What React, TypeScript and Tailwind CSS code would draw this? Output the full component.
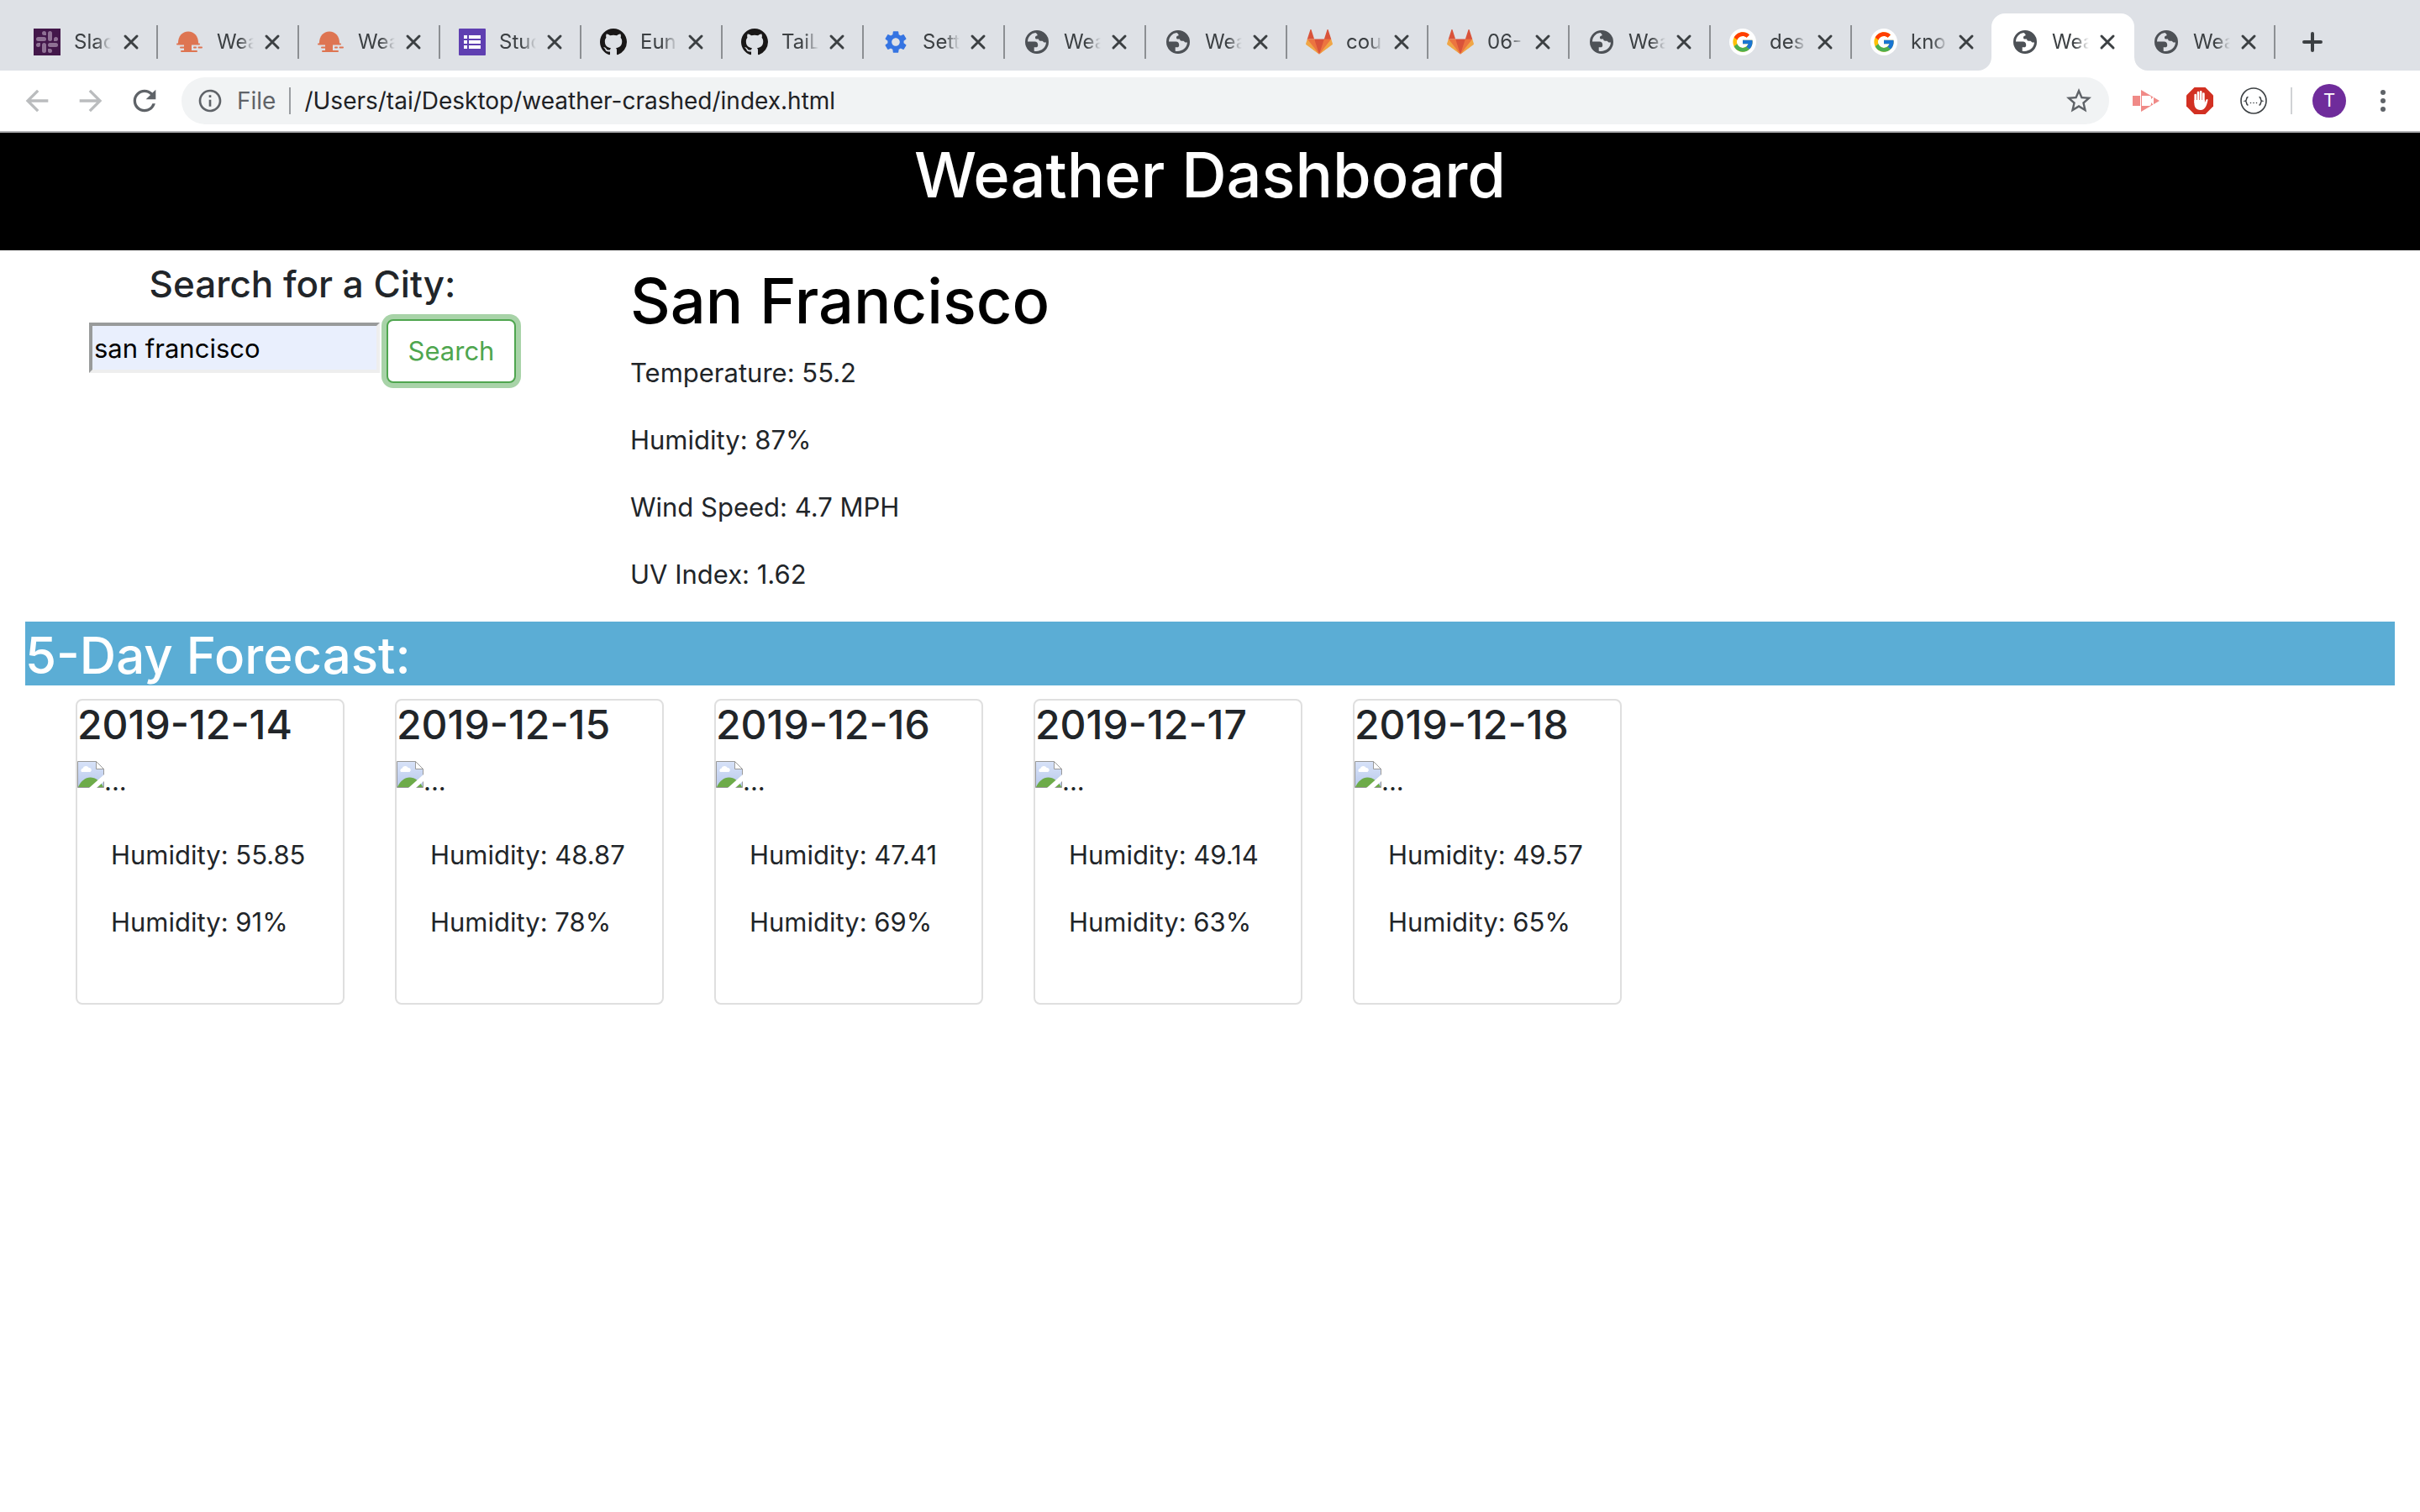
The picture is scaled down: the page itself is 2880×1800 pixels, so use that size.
import type { ReactNode } from "react";
import { FcGoogle } from "react-icons/fc";
import { MdArrowBack, MdArrowForward, MdInfoOutline, MdRefresh, MdSettings, MdStarBorder } from "react-icons/md";

function SlackIcon() {
  return (
    <svg viewBox="0 0 32 32" className="size-8">
      <rect width="32" height="32" fill="#43174a" />
      <g fill="#8f7194">
        <path d="M12.500 3a2.500 2.500 0 0 1 2.500 2.500V8h-2.500a2.500 2.500 0 0 1 0-5z" />
        <rect x="3" y="10" width="12" height="5" rx="2.500" />
        <path d="M29 12.500a2.500 2.500 0 0 1-2.500 2.500H24v-2.500a2.500 2.500 0 0 1 5 0z" />
        <rect x="17" y="3" width="5" height="12" rx="2.500" />
        <path d="M19.500 29a2.500 2.500 0 0 1-2.500-2.500V24h2.500a2.500 2.500 0 0 1 0 5z" />
        <rect x="17" y="17" width="12" height="5" rx="2.500" />
        <path d="M3 19.500A2.500 2.500 0 0 1 5.500 17H8v2.500a2.500 2.500 0 0 1-5 0z" />
        <rect x="10" y="17" width="5" height="12" rx="2.500" />
      </g>
    </svg>
  );
}

function SunriseIcon() {
  return (
    <svg viewBox="0 0 32 32" className="size-8" fill="#de7552">
      <path d="M2 17C2 9 7 3.500 14 3.500S26 9 26 17v1H2z" />
      <rect x="0" y="17.500" width="28" height="2" rx="1" />
      <path d="M9 19h9v8H9z" />
      <rect x="4" y="21.500" width="14" height="2" rx="1" />
      <rect x="20" y="21.500" width="4" height="2" rx="1" />
      <rect x="25.500" y="21.500" width="5.500" height="2" rx="1" />
      <rect x="5" y="26" width="20" height="2" rx="1" />
    </svg>
  );
}

function FormsIcon() {
  return (
    <svg viewBox="0 0 32 32" className="size-8">
      <rect width="32" height="32" rx="1" fill="#5f3fb1" />
      <path fill="#fff" d="M6 8h4v4H6zM6 14h4v4H6zM6 20h4v4H6zM12 8h14v4H12zM12 14h14v4H12zM12 20h14v4H12z" />
    </svg>
  );
}

function GithubIcon() {
  return (
    <svg viewBox="0 0 16 16" className="size-8" fill="#191717">
      <path d="M8 0C3.58 0 0 3.58 0 8c0 3.54 2.29 6.53 5.47 7.59.4.07.55-.17.55-.38 0-.19-.01-.82-.01-1.49-2.01.37-2.53-.49-2.69-.94-.09-.23-.48-.94-.82-1.13-.28-.15-.68-.52-.01-.53.63-.01 1.08.58 1.23.82.72 1.21 1.87.87 2.33.66.07-.52.28-.87.51-1.07-1.78-.2-3.64-.89-3.64-3.95 0-.87.31-1.59.82-2.15-.08-.2-.36-1.02.08-2.12 0 0 .67-.21 2.2.82.64-.18 1.32-.27 2-.27.68 0 1.36.09 2 .27 1.53-1.04 2.2-.82 2.2-.82.44 1.1.16 1.92.08 2.12.51.56.82 1.27.82 2.15 0 3.07-1.87 3.75-3.65 3.95.29.25.54.73.54 1.48 0 1.07-.01 1.93-.01 2.2 0 .21.15.46.55.38A8.013 8.013 0 0 0 16 8c0-4.42-3.58-8-8-8z" />
    </svg>
  );
}

function GlobeIcon() {
  return (
    <svg viewBox="-2 -2 32 32" className="size-8">
      <path
        fill="#4d5156"
        fillRule="evenodd"
        d="M14 0a14 14 0 1 0 0 28a14 14 0 1 0 0-28zM12.300 3C7 3.600 3.200 8 3 13.500h8.500c2.200 0 3.700 1.600 3.700 4v.500c0 1.400-1 2.300-2.300 2.300h-2.200v4.400C18 26 24.500 21.500 25 14.600h-2.500l-2-1.800h-2.200c-1.300 0-2.200-1-2.200-2.300h-3.300c-1.200-1-1-2.600-.100-3.400l1.800-.900c.700-1-.600-2-2.200-3.200z"
      />
    </svg>
  );
}

function GitlabIcon() {
  return (
    <svg viewBox="0 0 36 36" className="size-8">
      <path fill="#d9533a" d="M2 14l9.380 9v-9l-4-12.280c-.205-.632-1.176-.632-1.380 0zM34 14l-9.380 9v-9l4-12.280c.205-.632 1.176-.632 1.380 0zM18 34.380 3 14h30z" />
      <path fill="#ec7440" d="M18 34.380 11.380 14H2l4 11zM18 34.380 24.620 14H34l-4 11z" />
      <path fill="#f0a646" d="M2 14 .100 20.160c-.180.565 0 1.200.500 1.560L18 34.380zM34 14l1.900 6.160c.180.565 0 1.200-.500 1.560L18 34.380z" />
    </svg>
  );
}

function GoogleIcon() {
  return (
    <span className="flex size-8 items-center justify-center rounded-full bg-white">
      <FcGoogle className="size-7" />
    </span>
  );
}

function GearIcon() {
  return <MdSettings className="size-8 text-[#3574e2]" />;
}

function CloseIcon() {
  return (
    <svg viewBox="0 0 24 24" className="size-6" fill="none" stroke="#3c4043" strokeWidth="3" strokeLinecap="round">
      <path d="M5 5l14 14M19 5L5 19" />
    </svg>
  );
}

type TabInfo = { label: string; icon: ReactNode };

const tabs: TabInfo[] = [
  { label: "Slac", icon: <SlackIcon /> },
  { label: "Wea", icon: <SunriseIcon /> },
  { label: "Wea", icon: <SunriseIcon /> },
  { label: "Stud", icon: <FormsIcon /> },
  { label: "Eun", icon: <GithubIcon /> },
  { label: "TaiL", icon: <GithubIcon /> },
  { label: "Sett", icon: <GearIcon /> },
  { label: "Wea", icon: <GlobeIcon /> },
  { label: "Wea", icon: <GlobeIcon /> },
  { label: "cou", icon: <GitlabIcon /> },
  { label: "06-", icon: <GitlabIcon /> },
  { label: "Wea", icon: <GlobeIcon /> },
  { label: "des", icon: <GoogleIcon /> },
  { label: "kno", icon: <GoogleIcon /> },
  { label: "Wea", icon: <GlobeIcon /> },
  { label: "Wea", icon: <GlobeIcon /> },
];

const ACTIVE_TAB = 14;

function Tab({ tab, index }: { tab: TabInfo; index: number }) {
  const active = index === ACTIVE_TAB;
  const divided = !active && index !== ACTIVE_TAB - 1;
  return (
    <li className={index === 0 ? "relative w-[170px]" : "relative w-[168px]"}>
      {active && (
        <span className="absolute inset-y-0 -left-0.5 right-0 rounded-t-2xl bg-white">
          <svg viewBox="0 0 16 16" className="absolute -left-4 bottom-0 size-4" fill="#fff">
            <path d="M16 0v16H0A16 16 0 0 0 16 0z" />
          </svg>
          <svg viewBox="0 0 16 16" className="absolute -right-4 bottom-0 size-4" fill="#fff">
            <path d="M0 0v16h16A16 16 0 0 1 0 0z" />
          </svg>
        </span>
      )}
      <div className="relative flex h-full items-center pl-[22px]">
        {tab.icon}
        <a
          href="#"
          className="ml-4 w-11 overflow-hidden text-[24px] leading-8 whitespace-nowrap text-[#3c4043] [mask-image:linear-gradient(to_right,black_60%,transparent)]"
        >
          {tab.label}
        </a>
        <button type="button" aria-label="Close tab" className="mr-[18px] ml-auto">
          <CloseIcon />
        </button>
        <span className={divided ? "h-10 w-0.5 bg-[#8c8f93]" : "h-10 w-0.5"} />
      </div>
    </li>
  );
}

function CaptureIcon() {
  return (
    <svg viewBox="0 0 32 32" className="size-8">
      <path fill="#f08a87" d="M0 10h9v12H0zM10 3l22 13-22 13z" />
      <path fill="#fff" d="M11 10h9q2 0 2 2v2l3-3v10l-3-3v2q0 2-2 2h-9z" />
    </svg>
  );
}

function BlockIcon() {
  return (
    <svg viewBox="0 0 32 32" className="size-8">
      <path fill="#d23022" d="M9.500 0h13L32 9.500v13L22.500 32h-13L0 22.500v-13z" />
      <path stroke="#fff" strokeWidth="2.600" strokeLinecap="round" fill="none" d="M10.700 9v9M14 6v11M17.200 5.300V17M20.400 7.500V18" />
      <path fill="#fff" d="M9.400 15h12.300v3.500l1.800-3.700c.600-1.200 2-1.200 2 .300-.800 3.900-2.200 12-8.700 12-5.500 0-7.400-4.100-7.400-8z" />
    </svg>
  );
}

function BracesIcon() {
  return (
    <svg viewBox="0 0 32 32" className="size-8" fill="none" stroke="#3c4043">
      <circle cx="16" cy="16" r="15" strokeWidth="1.600" />
      <path strokeWidth="1.500" d="M9.500 11.500c-3 0-1 4.200-3.300 4.800 2.300.600.300 4.800 3.300 4.800M22.500 11.500c3 0 1 4.200 3.300 4.800-2.300.600-.300 4.800-3.300 4.800" />
      <path strokeWidth="1.600" strokeLinecap="round" strokeDasharray="0 3.500" d="M12.500 18.500h8" />
    </svg>
  );
}

function BrokenImageIcon() {
  return (
    <svg viewBox="0 0 32 32" className="size-8">
      <defs>
        <linearGradient id="sky" x1="0" y1="0" x2="0" y2="1">
          <stop offset="0" stopColor="#d7e2f8" />
          <stop offset="1" stopColor="#b9c9ec" />
        </linearGradient>
      </defs>
      <path fill="url(#sky)" stroke="#9a9a9a" d="M.500.500h22l9 9v22H.500z" />
      <path fill="#fff" stroke="#9a9a9a" d="M22.500.500v9h9z" />
      <path fill="#fff" d="M5 13a2.600 2.600 0 0 1 1.500-4.300 4 4 0 0 1 7.300-.700A2.700 2.700 0 0 1 15.500 13z" />
      <path fill="#6dab49" d="M1 31c3-7 8.500-11.500 14.500-11.500S28 24 31 31z" />
      <path fill="#fff" d="M32 16v8l-9 8h-9z" />
    </svg>
  );
}

function BrowserChrome() {
  return (
    <header>
      <nav aria-label="Tabs" className="flex h-[84px] bg-[#dee1e6] pt-4 pl-[18px]">
        <ul className="flex">
          {tabs.map((tab, index) => (
            <Tab key={index} tab={tab} index={index} />
          ))}
        </ul>
        <button type="button" aria-label="New tab" className="ml-8">
          <svg viewBox="0 0 24 24" className="size-6" fill="none" stroke="#3c4043" strokeWidth="4" strokeLinecap="round">
            <path d="M12 2v20M2 12h20" />
          </svg>
        </button>
      </nav>
      <div className="flex h-[74px] items-center border-b-2 border-[#b0b1b3] px-3 text-[#5f6368]">
        <button type="button" aria-label="Back" className="flex w-16 justify-center text-[#babcbe]">
          <MdArrowBack className="size-10" />
        </button>
        <button type="button" aria-label="Forward" className="flex w-16 justify-center text-[#babcbe]">
          <MdArrowForward className="size-10" />
        </button>
        <button type="button" aria-label="Reload" className="flex w-16 justify-center">
          <MdRefresh className="size-10" />
        </button>
        <div className="mx-3 flex h-14 flex-1 items-center rounded-full bg-[#f1f3f4] px-[18px] text-[28px]">
          <MdInfoOutline className="size-8" />
          <label htmlFor="address" className="ml-4">
            File
          </label>
          <span className="ml-4 h-8 w-0.5 bg-[#9a9da1]" />
          <input
            id="address"
            type="text"
            defaultValue="/Users/tai/Desktop/weather-crashed/index.html"
            className="ml-4 h-10 flex-1 bg-transparent text-[#202124] outline-none"
          />
          <button type="button" aria-label="Bookmark this page">
            <MdStarBorder className="size-9" />
          </button>
        </div>
        <button type="button" aria-label="Screen capture" className="flex w-16 justify-center">
          <CaptureIcon />
        </button>
        <button type="button" aria-label="Ad blocker" className="flex w-16 justify-center">
          <BlockIcon />
        </button>
        <button type="button" aria-label="Formatter" className="flex w-16 justify-center">
          <BracesIcon />
        </button>
        <span className="ml-3 h-8 w-0.5 bg-[#d0d2d5]" />
        <button
          type="button"
          aria-label="Profile"
          className="ml-6 flex size-10 items-center justify-center rounded-full bg-[#6f2c9b] font-['Roboto'] text-[22px] text-white"
        >
          T
        </button>
        <button type="button" aria-label="Menu" className="ml-3 flex w-16 justify-center">
          <svg viewBox="0 0 32 32" className="size-8" fill="#5f6368">
            <circle cx="16" cy="6" r="3" />
            <circle cx="16" cy="16" r="3" />
            <circle cx="16" cy="26" r="3" />
          </svg>
        </button>
      </div>
    </header>
  );
}

const current = ["Temperature: 55.2", "Humidity: 87%", "Wind Speed: 4.7 MPH", "UV Index: 1.62"];

const forecast = [
  { date: "2019-12-14", temperature: "55.85", humidity: "91%" },
  { date: "2019-12-15", temperature: "48.87", humidity: "78%" },
  { date: "2019-12-16", temperature: "47.41", humidity: "69%" },
  { date: "2019-12-17", temperature: "49.14", humidity: "63%" },
  { date: "2019-12-18", temperature: "49.57", humidity: "65%" },
];

export default function App() {
  return (
    <div className="min-h-screen bg-white font-['Inter','Liberation_Sans',sans-serif] text-[31px] leading-[48px] text-[#212529]">
      <BrowserChrome />
      <div className="bg-black pb-10 text-center">
        <h1 className="text-[74px] leading-[100px] font-medium text-white">Weather Dashboard</h1>
      </div>
      <main className="px-[30px] pt-2.5">
        <div className="-mx-[30px] flex">
          <form className="w-1/4 px-[30px] text-center" onSubmit={(event) => event.preventDefault()}>
            <label htmlFor="city" className="block text-[44px] leading-[60px] font-medium">
              Search for a City:
            </label>
            <div className="mt-3 flex items-start justify-center gap-2">
              <input
                id="city"
                type="text"
                defaultValue="san francisco"
                className="mt-1 h-[60px] w-[346px] border-4 border-t-[#999b9b] border-r-[#eeeeee] border-b-[#eeeeee] border-l-[#999b9b] bg-[#e9effd] px-0.5 text-black outline-none"
              />
              <button
                type="submit"
                className="h-[76px] w-[154px] rounded-lg border-2 border-[#4fa64f] bg-white text-[#4fa64f] ring-6 ring-[#a8d3a8]"
              >
                Search
              </button>
            </div>
          </form>
          <section className="flex-1 px-[30px]">
            <h2 className="mb-3 text-[74px] leading-[100px] font-medium text-black">San Francisco</h2>
            {current.map((line) => (
              <p key={line} className="mb-8">
                {line}
              </p>
            ))}
          </section>
        </div>
        <h2 className="bg-[#5badd5] pt-1 text-[60px] leading-[72px] font-medium text-white">5-Day Forecast:</h2>
        <div className="mt-4 flex flex-wrap gap-[60px] px-[60px]">
          {forecast.map((day) => (
            <article key={day.date} className="w-[320px] rounded-lg border-2 border-[#dfdfdf] bg-white">
              <h3 className="mb-3.5 text-[48px] leading-[58px] font-medium">{day.date}</h3>
              <div className="flex items-start">
                <BrokenImageIcon />
                <span>...</span>
              </div>
              <div className="p-10">
                <p className="mb-8">Humidity: {day.temperature}</p>
                <p className="mb-8">Humidity: {day.humidity}</p>
              </div>
            </article>
          ))}
        </div>
      </main>
    </div>
  );
}
